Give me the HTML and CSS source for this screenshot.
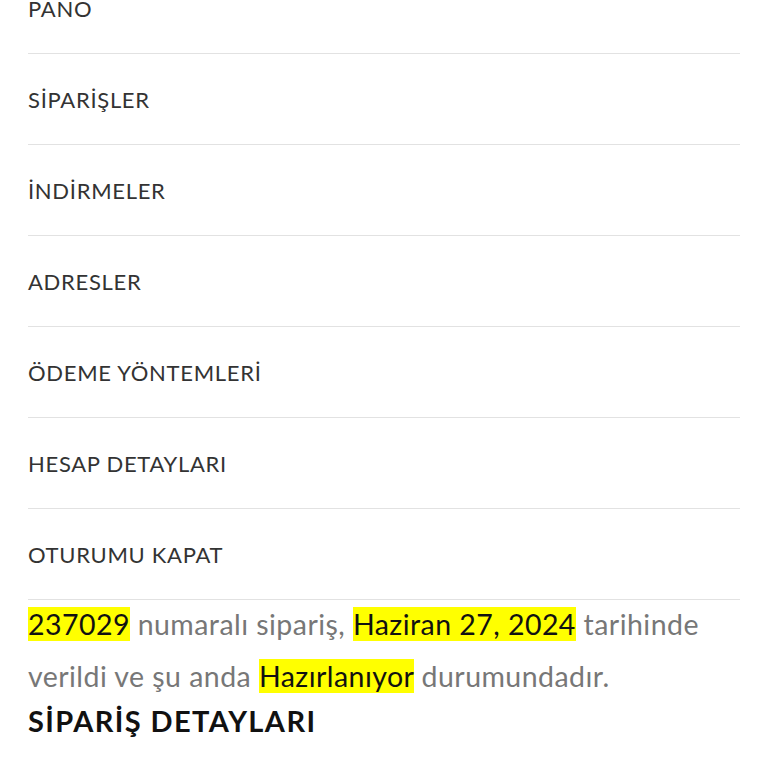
FILE: index.html
```html
<!DOCTYPE html>
<html lang="tr">
<head>
<meta charset="utf-8">
<title>Hesabım</title>
<link rel="stylesheet" href="styles.css">
</head>
<body>
<div class="page">
  <nav class="account-nav">
    <ul class="nav-list">
      <li class="nav-item"><a href="#">PANO</a></li>
      <li class="nav-item"><a href="#">SİPARİŞLER</a></li>
      <li class="nav-item"><a href="#">İNDİRMELER</a></li>
      <li class="nav-item"><a href="#">ADRESLER</a></li>
      <li class="nav-item"><a href="#">ÖDEME YÖNTEMLERİ</a></li>
      <li class="nav-item"><a href="#">HESAP DETAYLARI</a></li>
      <li class="nav-item"><a href="#">OTURUMU KAPAT</a></li>
    </ul>
  </nav>
  <p class="order-info"><mark>237029</mark> numaralı sipariş, <mark>Haziran 27, 2024</mark> tarihinde verildi ve şu anda <mark>Hazırlanıyor</mark> durumundadır.</p>
  <h2 class="section-title">SİPARİŞ DETAYLARI</h2>
</div>
</body>
</html>
```
FILE: styles.css
```css
html, body {
  margin: 0;
  padding: 0;
  background: #ffffff;
}
body {
  font-family: Lato, "Noto Sans", "Liberation Sans", sans-serif;
}
.page {
  padding: 0 28px;
  margin-top: -37px;
}
.nav-list {
  list-style: none;
  margin: 0;
  padding: 0;
}
.nav-item {
  height: 90px;
  display: flex;
  align-items: center;
  border-bottom: 1px solid #e2e2e2;
}
.nav-item a {
  color: #333333;
  text-decoration: none;
  font-size: 22px;
  letter-spacing: 0.7px;
}
.order-info {
  margin: -2px 0 0;
  font-size: 28.5px;
  line-height: 52px;
  letter-spacing: 0.45px;
  color: #777777;
}
.order-info mark {
  background: #ffff00;
  color: #111111;
}
.section-title {
  margin: 0;
  font-size: 29px;
  line-height: 38px;
  font-weight: 700;
  letter-spacing: 1.4px;
  color: #111111;
}
```
